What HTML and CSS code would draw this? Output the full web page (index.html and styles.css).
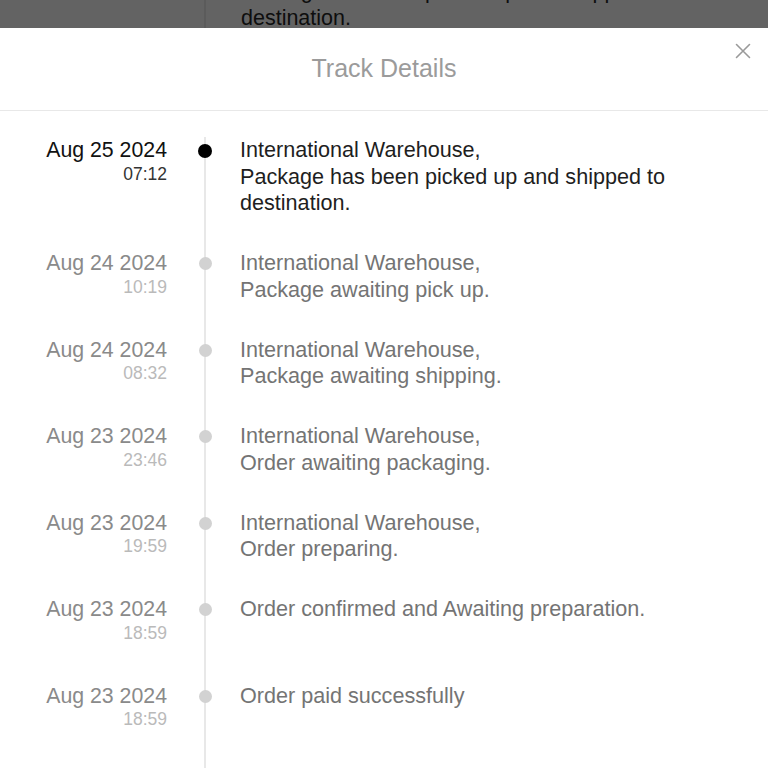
FILE: index.html
```html
<!DOCTYPE html>
<html lang="en">
<head>
<meta charset="utf-8">
<title>Track Details</title>
<link rel="stylesheet" href="styles.css">
</head>
<body>
<div class="backdrop">
  <div class="backdrop-text">Package has been picked up and shipped to<br>destination.</div>
</div>
<section class="sheet">
  <header class="sheet-head">
    <h1 class="title">Track Details</h1>
    <button class="close" aria-label="Close">
      <svg width="16" height="16" viewBox="0 0 16 16"><path d="M1.5 1.5 L14.5 14.5 M14.5 1.5 L1.5 14.5" stroke="#9a9a9a" stroke-width="1.6" fill="none" stroke-linecap="round"/></svg>
    </button>
  </header>
  <ol class="timeline">
    <li class="row active">
      <div class="when"><div class="date">Aug 25 2024</div><div class="time">07:12</div></div>
      <div class="axis"><span class="dot"></span></div>
      <div class="what">International Warehouse,<br>Package has been picked up and shipped to destination.</div>
    </li>
    <li class="row">
      <div class="when"><div class="date">Aug 24 2024</div><div class="time">10:19</div></div>
      <div class="axis"><span class="dot"></span></div>
      <div class="what">International Warehouse,<br>Package awaiting pick up.</div>
    </li>
    <li class="row">
      <div class="when"><div class="date">Aug 24 2024</div><div class="time">08:32</div></div>
      <div class="axis"><span class="dot"></span></div>
      <div class="what">International Warehouse,<br>Package awaiting shipping.</div>
    </li>
    <li class="row">
      <div class="when"><div class="date">Aug 23 2024</div><div class="time">23:46</div></div>
      <div class="axis"><span class="dot"></span></div>
      <div class="what">International Warehouse,<br>Order awaiting packaging.</div>
    </li>
    <li class="row">
      <div class="when"><div class="date">Aug 23 2024</div><div class="time">19:59</div></div>
      <div class="axis"><span class="dot"></span></div>
      <div class="what">International Warehouse,<br>Order preparing.</div>
    </li>
    <li class="row">
      <div class="when"><div class="date">Aug 23 2024</div><div class="time">18:59</div></div>
      <div class="axis"><span class="dot"></span></div>
      <div class="what">Order confirmed and Awaiting preparation.</div>
    </li>
    <li class="row">
      <div class="when"><div class="date">Aug 23 2024</div><div class="time">18:59</div></div>
      <div class="axis"><span class="dot"></span></div>
      <div class="what">Order paid successfully</div>
    </li>
  </ol>
</section>
</body>
</html>
```
FILE: styles.css
```css
* { box-sizing: border-box; }
html, body { margin: 0; padding: 0; }
body {
  font-family: "Liberation Sans", Arial, sans-serif;
  background: #ffffff;
  height: 768px;
  overflow: hidden;
}
.backdrop {
  height: 28px;
  background: #636363;
  overflow: hidden;
}
.backdrop-text {
  margin-left: 204px;
  margin-top: -22px;
  padding-left: 35px;
  border-left: 2px solid #5b5b5b;
  font-size: 21.5px;
  line-height: 26.5px;
  color: #0e0e0e;
  height: 60px;
}
.sheet {
  background: #ffffff;
  position: relative;
}
.sheet-head {
  border-bottom: 1px solid #e8e8e8;
  padding: 25px 0 27px;
  text-align: center;
}
.title {
  margin: 0;
  font-size: 25px;
  line-height: 30px;
  font-weight: normal;
  color: #9b9b9b;
}
.close {
  position: absolute;
  top: 15px;
  right: 17px;
  width: 16px;
  height: 16px;
  padding: 0;
  border: 0;
  background: none;
  display: block;
}
.close svg { display: block; }
.timeline {
  list-style: none;
  margin: 0;
  padding: 26px 0 0;
}
.row {
  display: grid;
  grid-template-columns: 167px 73px 1fr;
  min-height: 86.5px;
}
.when {
  text-align: right;
  padding-bottom: 33.5px;
}
.date {
  font-size: 21.3px;
  line-height: 26.5px;
  color: #8a8a8a;
}
.time {
  font-size: 17.5px;
  line-height: 21.5px;
  color: #bababa;
}
.axis {
  background: linear-gradient(#e8e8e8, #e8e8e8) no-repeat 37px 0 / 2px 100%;
}
.row:first-child .axis { background-position: 37px -8px; background-size: 2px calc(100% + 8px); }
.dot {
  display: block;
  width: 13px;
  height: 13px;
  border-radius: 50%;
  background: #d2d2d2;
  margin: 7px 0 0 31.5px;
}
.what {
  font-size: 21.6px;
  line-height: 26.5px;
  color: #747474;
  padding-bottom: 33.5px;
  padding-right: 60px;
}
.row.active .date { color: #111111; }
.row.active .time { color: #333333; }
.row.active .what { color: #1e1e1e; }
.row.active .dot { background: #000000; width: 14px; height: 14px; margin: 6.5px 0 0 31px; }
```
